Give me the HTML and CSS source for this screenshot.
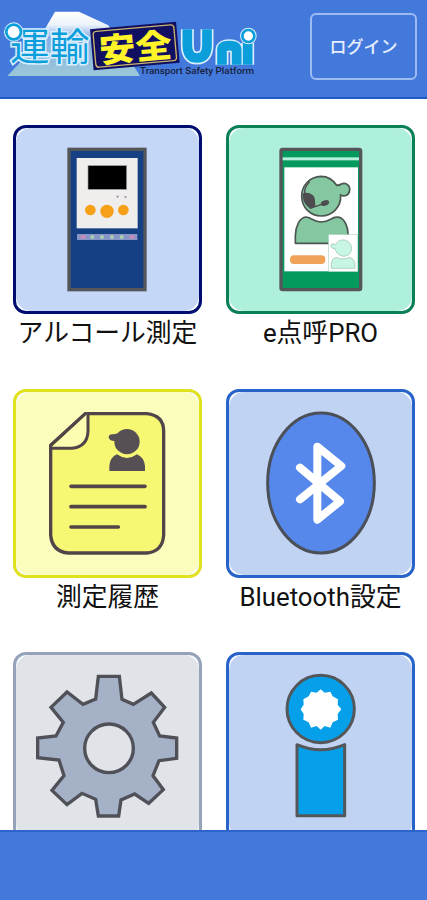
FILE: index.html
```html
<!DOCTYPE html>
<html lang="ja">
<head>
<meta charset="utf-8">
<meta name="viewport" content="width=device-width, initial-scale=1">
<title>運輸安全Uni</title>
<link rel="stylesheet" href="styles.css">
</head>
<body>
<div class="app">
  <header class="header">
    <svg class="logo" viewBox="0 0 810 291">
      <defs>
        <linearGradient id="mountain" x1="0" y1="0" x2="0" y2="1">
          <stop offset="0" stop-color="#fff"/>
          <stop offset=".2" stop-color="#eef4fc"/>
          <stop offset=".4" stop-color="#85aee5"/>
          <stop offset="1" stop-color="#9bc8d8"/>
        </linearGradient>
      </defs>
      <path d="M165 35H237L325 76L420 228H22Q90 160 140 78Z" fill="url(#mountain)"/>
      <text class="logo-kanji" x="30" y="181" textLength="238" lengthAdjust="spacingAndGlyphs">運輸</text>
      <circle cx="41" cy="96" r="22" fill="#fff" stroke="#d9efff" stroke-width="14"/>
      <circle cx="41" cy="96" r="22" fill="#fff" stroke="#0c9edb" stroke-width="8"/>
      <g transform="rotate(-5 405 138)">
        <rect x="275" y="76" width="259" height="124" fill="#100f62"/>
        <rect x="283" y="84" width="243" height="108" rx="10" fill="none" stroke="#c9b56a" stroke-width="4"/>
        <text class="logo-safety" x="297" y="179" textLength="218" lengthAdjust="spacingAndGlyphs">安全</text>
      </g>
      <path class="logo-outline" d="M562 88V135Q562 174 591 174Q621 174 621 135V88M666 194V150Q666 137 688 137Q710 137 710 150V194M743 128V194"/>
      <path class="logo-stroke" d="M562 88V135Q562 174 591 174Q621 174 621 135V88M666 194V150Q666 137 688 137Q710 137 710 150V194M743 128V194"/>
      <circle cx="745" cy="108" r="18" fill="#fff" stroke="#d9efff" stroke-width="14"/>
      <circle cx="745" cy="108" r="18" fill="#fff" stroke="#0c9edb" stroke-width="8"/>
      <text class="logo-tagline" x="420" y="223" textLength="342" lengthAdjust="spacingAndGlyphs">Transport Safety Platform</text>
    </svg>
    <button class="login">ログイン</button>
  </header>

  <main class="menu">
    <a class="item">
      <span class="card navy">
        <svg class="icon" viewBox="48 39 549 549">
          <rect x="207" y="103" width="228" height="421" fill="#154084" stroke="#55565a" stroke-width="10"/>
          <rect x="230" y="129" width="183" height="211" fill="#efeeed"/>
          <rect x="264" y="152" width="116" height="71" stroke="#999" stroke-width="2"/>
          <path d="M348 242h9l-4 8zM371 246l8-4v8z" fill="#8c9099"/>
          <g fill="#f5a016"><circle cx="271" cy="285" r="16"/><circle cx="321" cy="289" r="20"/><circle cx="370" cy="285" r="16"/></g>
          <rect x="231" y="357" width="181" height="18" fill="#8796c6"/>
          <g fill="#c98bb8"><rect x="242" y="361" width="15" height="10"/><rect x="389" y="361" width="15" height="10"/></g>
          <g fill="#a9cfae"><circle cx="277" cy="366" r="6"/><circle cx="306" cy="366" r="6"/><circle cx="336" cy="366" r="6"/><circle cx="365" cy="366" r="6"/></g>
        </svg>
      </span>
      <span class="label">アルコール測定</span>
    </a>

    <a class="item">
      <span class="card green">
        <svg class="icon" viewBox="45 39 549 549">
          <rect x="201" y="103" width="239" height="421" rx="5" fill="#049a5d" stroke="#55565a" stroke-width="10"/>
          <rect x="206" y="127" width="229" height="9" fill="#b4f0dc"/>
          <rect x="211" y="157" width="221" height="312" fill="#fff"/>
          <path d="M368 211Q377 211 382 207C398 201 409 213 407 226C404 243 390 245 380 240C382 277 354 303 322 303C290 303 263 278 263 243C263 211 288 185 321 184C341 184 356 193 368 211Z" fill="#84c7a0" stroke="#4b5650" stroke-width="5"/>
          <path d="M267 235C285 230 302 239 303 256L304 274L289 281C273 271 264 255 267 235Z" fill="#4d4c4f"/>
          <path d="M273 236Q268 219 287 200M288 280L323 268" fill="none" stroke="#4d4c4f" stroke-width="4"/>
          <ellipse cx="333" cy="264" rx="13" ry="8" transform="rotate(-20 333 264)" fill="#4d4c4f"/>
          <path d="M244 385V362C245 334 256 308 276 306Q287 307 294 313Q322 329 350 313Q362 304 376 307C394 314 402 337 402 358V385Z" fill="#84c7a0" stroke="#4b5650" stroke-width="5" stroke-linejoin="round"/>
          <rect x="228" y="421" width="106" height="26" rx="12" fill="#efa258"/>
          <rect x="344" y="359" width="87" height="110" fill="#fff" stroke="#add8c3" stroke-width="2"/>
          <path d="M365 389C371 373 392 371 404 381C419 395 413 416 399 422C382 428 366 416 363 401Q353 402 351 394Q350 386 357 386ZM352 460V444Q354 430 366 427Q387 437 407 427Q420 431 423 445V460Z" fill="#c7f7e2" stroke="#9ab9aa" stroke-width="2"/>
        </svg>
      </span>
      <span class="label">e点呼PRO</span>
    </a>

    <a class="item">
      <span class="card yellow">
        <svg class="icon" viewBox="48 35 549 549">
          <path d="M256 100H440Q491 105 491 153V464Q488 514 440 518H205Q156 514 152 464V195Z" fill="#f6f873" stroke="#514549" stroke-width="10" stroke-linejoin="round"/>
          <path d="M264 101V153Q262 199 216 204H153L261 100Z" fill="#fbfdb0"/>
          <path d="M264 101V153Q262 199 216 204H153M153 194L257 99" fill="none" stroke="#514549" stroke-width="9"/>
          <circle cx="381" cy="184" r="38" fill="#565055"/>
          <path d="M355 159L341 162Q326 160 326 171Q328 183 346 182ZM328 272V257Q330 231 351 222Q381 244 411 222Q433 232 435 257V272Z" fill="#565055"/>
          <path d="M213 318H435M213 379H435M213 440H355" fill="none" stroke="#514549" stroke-width="11" stroke-linecap="round"/>
        </svg>
      </span>
      <span class="label">測定履歴</span>
    </a>

    <a class="item">
      <span class="card blue">
        <svg class="icon" viewBox="45 35 549 549">
          <ellipse cx="321" cy="308" rx="160" ry="210" fill="#5688ec" stroke="#4b4f57" stroke-width="9"/>
          <path d="M258 262L378 363L310 418V199L382 257L258 357" fill="none" stroke="#fff" stroke-width="24" stroke-linecap="round" stroke-linejoin="round"/>
        </svg>
      </span>
      <span class="label">Bluetooth設定</span>
    </a>

    <a class="item">
      <span class="card gray">
        <svg class="icon" viewBox="48 45 549 549">
          <path d="M295 109H358L366 178L400 193L454 159L494 202L460 247L479 288L530 294V355L477 362L459 407L490 449L446 490L404 462L363 480L356 528H295L287 478L246 460L201 494L156 451L192 407L177 360L113 353V294L168 288L190 247L153 202L201 156L249 193L287 177Z" fill="#a4b1c7" stroke="#505158" stroke-width="10"/>
          <circle cx="327" cy="325" r="73" fill="#e0e4e8" stroke="#505158" stroke-width="10"/>
        </svg>
      </span>
    </a>

    <a class="item">
      <span class="card blue">
        <svg class="icon" viewBox="45 45 549 549">
          <circle cx="320" cy="207" r="101" fill="#05a0e9" stroke="#54575a" stroke-width="9"/>
          <path d="M320 148L332 158L349 155L356 169L372 178L371 194L382 208L371 222L372 239L356 247L349 263L332 258L320 269L308 258L291 263L284 247L268 239L269 222L260 208L269 194L268 178L284 169L291 155L308 158Z" fill="#fff"/>
          <path d="M249 314Q320 345 392 314V527H249Z" fill="#05a0e9" stroke="#54575a" stroke-width="9" stroke-linejoin="round"/>
        </svg>
      </span>
    </a>
  </main>

  <footer class="footer"></footer>
</div>
</body>
</html>
```
FILE: styles.css
```css
* {
  box-sizing: border-box;
}

body {
  margin: 0;
  background: #fff;
  color: #111;
  font-family: Roboto, "Noto Sans CJK JP", sans-serif;
}

.app {
  display: flex;
  flex-direction: column;
  height: 900px;
  overflow: hidden;
}

.header {
  display: flex;
  flex: none;
  justify-content: space-between;
  align-items: flex-start;
  height: 99px;
  padding-right: 10px;
  background: #4479dc;
  border-bottom: 2px solid #1e5bc9;
}

.logo {
  display: block;
  width: 270px;
  height: 97px;
}

.logo-kanji {
  font: 400 114px "Noto Sans CJK JP", sans-serif;
  fill: #0c9edb;
  stroke: #d9efff;
  stroke-width: 9px;
  paint-order: stroke;
}

.logo-safety {
  font: 900 98px "Noto Sans CJK JP", sans-serif;
  fill: #fff32a;
}

.logo-outline,
.logo-stroke {
  fill: none;
  stroke: #d9efff;
  stroke-width: 39px;
}

.logo-stroke {
  stroke: #0c9edb;
  stroke-width: 29px;
}

.logo-tagline {
  font: 500 26px Roboto, sans-serif;
  fill: #17213b;
}

.login {
  width: 107px;
  height: 67px;
  margin-top: 13px;
  padding: 0 0 2px;
  border: 2px solid #9dbbf0;
  border-radius: 6px;
  background: transparent;
  color: #e6effd;
  font: 500 17px "Noto Sans CJK JP", sans-serif;
}

.menu {
  display: grid;
  flex: 1;
  grid-template-columns: 189px 189px;
  grid-auto-rows: 263.5px;
  column-gap: 24px;
  align-content: start;
  min-height: 0;
  padding: 26px 0 0 13px;
  overflow: hidden;
}

.item {
  display: flex;
  flex-direction: column;
  align-items: center;
}

.card {
  width: 189px;
  height: 189px;
  border: 3px solid var(--edge);
  border-radius: 13px;
  background: #f7faff;
}

.icon {
  display: block;
  width: 183px;
  height: 183px;
  border-radius: 15px;
  background: var(--fill);
}

.navy { --edge: #000d6e; --fill: #c5d7f7; }
.green { --edge: #0b8055; --fill: #aff0dd; }
.yellow { --edge: #e1e11e; --fill: #fbfdbd; }
.blue { --edge: #2763c8; --fill: #c1d3f2; }
.gray { --edge: #95a2ba; --fill: #e0e4e8; }

.label {
  height: 38px;
  font-size: 25.8px;
  line-height: 38px;
  white-space: nowrap;
}

.footer {
  flex: none;
  height: 70px;
  background: #4479dc;
  border-top: 2px solid #2b64cd;
}
```
